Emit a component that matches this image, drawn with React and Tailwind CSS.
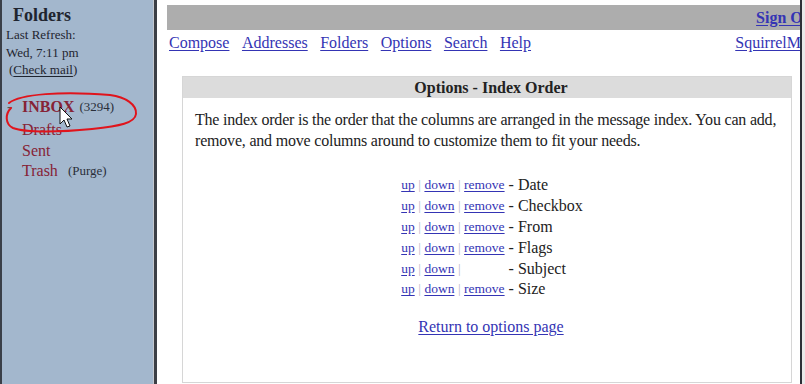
import React from "react";

const folders = [
  { name: "Drafts", h: "h-[21px]" },
  { name: "Sent", h: "h-[21px]" },
];

const columns = [
  { name: "Date", remove: true },
  { name: "Checkbox", remove: true },
  { name: "From", remove: true },
  { name: "Flags", remove: true },
  { name: "Subject", remove: false },
  { name: "Size", remove: true },
];

const navLinks = ["Compose", "Addresses", "Folders", "Options", "Search", "Help"];

const linkCls = "text-[#3434b4] underline underline-offset-2";

const App = () => {
  return (
    <div className="flex h-[384px] w-[805px] overflow-hidden bg-white font-['Liberation_Serif',serif] text-[#222]">
      {/* left folder frame */}
      <aside className="relative w-[153px] shrink-0 border-l-2 border-[#3a3f48] bg-[#a3b7cd] text-[#1f2530]">
        <div className="pl-[11px] pt-[4px] text-[18px] font-bold leading-[22px]">Folders</div>
        <div className="pl-[4px] text-[13px] leading-[17.5px]">
          <div>Last Refresh:</div>
          <div>Wed, 7:11 pm</div>
          <div className="pl-[3px]">
            (<span className="underline underline-offset-2">Check mail</span>)
          </div>
        </div>
        <div className="mt-[17px] text-[16px] text-[#862336]">
          <div className="flex h-[23px] items-center">
            <span className="w-[20px] pl-[5px] text-[#555]">-</span>
            <span className="font-bold">INBOX</span>
            <span className="ml-[5px] text-[13px] text-[#2a2f3a]">(3294)</span>
          </div>
          {folders.map((f) => (
            <div key={f.name} className={`${f.h} pl-[20px] leading-[21px]`}>
              {f.name}
            </div>
          ))}
          <div className="flex h-[21px] items-center pl-[20px]">
            <span>Trash</span>
            <span className="ml-[10px] text-[13px] text-[#2a2f3a]">(Purge)</span>
          </div>
        </div>

        {/* red annotation + cursor on top of the list */}
        <svg className="absolute left-0 top-[86px]" width="150" height="52" viewBox="0 86 150 52">
          <path
            d="M7 103 C 18 94, 60 91, 108 95 C 124 97, 135 105, 134 114 C 133 123, 118 126, 90 129 C 60 132, 24 133, 11 128 C 3 124, 3 114, 9 108"
            fill="none"
            stroke="#e0141c"
            strokeWidth="2"
            strokeLinecap="round"
          />
          <path
            d="M58 107 L58 124 L62 120 L65 127 L68 126 L65 119 L70 119 Z"
            fill="#fff"
            stroke="#111"
            strokeWidth="1"
            strokeLinejoin="round"
          />
        </svg>
      </aside>

      {/* frame divider */}
      <div className="w-[4px] shrink-0 border-l border-[#c4c8cf] bg-[#3c3f46]" />

      {/* right content frame, clipped at its right edge */}
      <div className="flex w-[648px] shrink-0">
        <div className="w-[643px] overflow-hidden">
          <div className="w-[662px] pl-[10px] pt-[5px]">
            <div className="flex h-[25px] items-center justify-end bg-[#adadad] pr-[2px]">
              <span className={`text-[16px] font-bold ${linkCls}`}>Sign Out</span>
            </div>
            <div className="mt-[3px] flex h-[20px] items-center justify-between pl-[2px] pr-[2px] text-[16px]">
              <div className="flex gap-[12.5px]">
                {navLinks.map((l) => (
                  <span key={l} className={linkCls}>
                    {l}
                  </span>
                ))}
              </div>
              <span className={linkCls}>SquirrelMail</span>
            </div>

            <div className="ml-[15px] mt-[23px] h-[307px] w-[610px] border border-[#d6d6d6] text-[16px]">
              <div className="flex h-[21px] items-center justify-center bg-[#dcdcdc] pl-[8px] font-bold">
                Options - Index Order
              </div>
              <div className="pl-[12px] pr-[2px] pt-[11px] leading-[21px] tracking-[-0.2px]">
                The index order is the order that the columns are arranged in the message index. You can add,
                remove, and move columns around to customize them to fit your needs.
              </div>
              <div className="mt-[24px] flex justify-center pl-[10px]">
                <table className="border-collapse">
                  <tbody>
                    {columns.map((c) => (
                      <tr key={c.name} className="h-[20.8px]">
                        <td className="pr-[4px] text-[13.5px] leading-[20px]">
                          <span className={linkCls}>up</span>
                          <span className="px-[3.5px] text-[#b8b8c8]">|</span>
                          <span className={linkCls}>down</span>
                          <span className="px-[3.5px] text-[#b8b8c8]">|</span>
                          {c.remove && <span className={linkCls}>remove</span>}
                        </td>
                        <td className="leading-[20px]">- {c.name}</td>
                      </tr>
                    ))}
                  </tbody>
                </table>
              </div>
              <div className="mt-[15px] pl-[8px] text-center">
                <span className={linkCls}>Return to options page</span>
              </div>
            </div>
          </div>
        </div>
        <div className="w-[2px] bg-[#2c2f36]" />
        <div className="w-[3px] bg-[#e8e8e8]" />
      </div>
    </div>
  );
};

export default App;
